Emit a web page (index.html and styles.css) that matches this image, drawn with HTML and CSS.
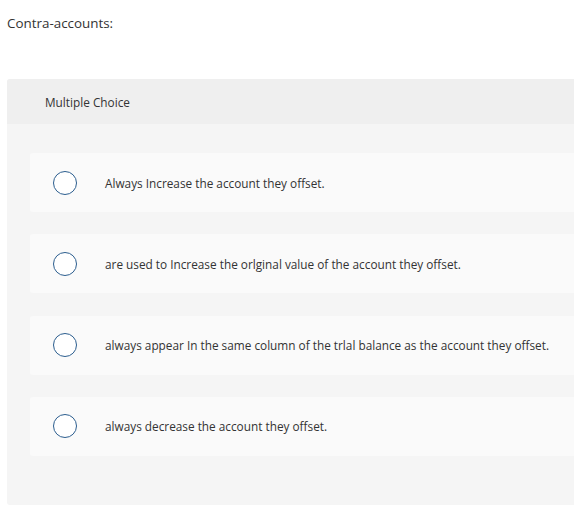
FILE: index.html
```html
<!DOCTYPE html>
<html>
<head>
<meta charset="utf-8">
<link rel="stylesheet" href="styles.css">
</head>
<body>
<div class="page">
  <p class="question">Contra-accounts:</p>
  <div class="panel">
    <div class="panel-head">Multiple Choice</div>
    <div class="panel-body">
      <div class="option"><span class="radio"></span><span class="label">Always Increase the account they offset.</span></div>
      <div class="option"><span class="radio"></span><span class="label">are used to Increase the orlginal value of the account they offset.</span></div>
      <div class="option"><span class="radio"></span><span class="label">always appear In the same column of the trlal balance as the account they offset.</span></div>
      <div class="option"><span class="radio"></span><span class="label">always decrease the account they offset.</span></div>
    </div>
  </div>
</div>
</body>
</html>
```
FILE: styles.css
```css
html, body {
  margin: 0;
  padding: 0;
  background: #ffffff;
  overflow: hidden;
}
.page {
  padding: 0 0 0 7px;
  font-family: "Open Sans", "Liberation Sans", sans-serif;
  color: #333333;
}
.question {
  margin: 0;
  padding-top: 14px;
  height: 79px;
  box-sizing: border-box;
  font-size: 13.4px;
  line-height: 18px;
}
.panel {
  background: #f5f5f5;
  border-radius: 3px 0 0 3px;
}
.panel-head {
  background: #efefef;
  height: 45px;
  display: flex;
  align-items: center;
  padding-left: 38px;
  font-size: 11.8px;
  border-radius: 3px 0 0 0;
}
.panel-body {
  padding: 29px 0 49px 23px;
  display: flex;
  flex-direction: column;
  gap: 22.3px;
}
.option {
  background: #fafafa;
  height: 59px;
  border-radius: 3px 0 0 3px;
  display: flex;
  align-items: center;
  padding-left: 23px;
}
.radio {
  width: 22px;
  height: 22px;
  border: 1.5px solid #2b5d8e;
  border-radius: 50%;
  background: #ffffff;
  flex: none;
}
.label {
  margin-left: 28px;
  font-size: 11.8px;
  color: #333333;
}
```
